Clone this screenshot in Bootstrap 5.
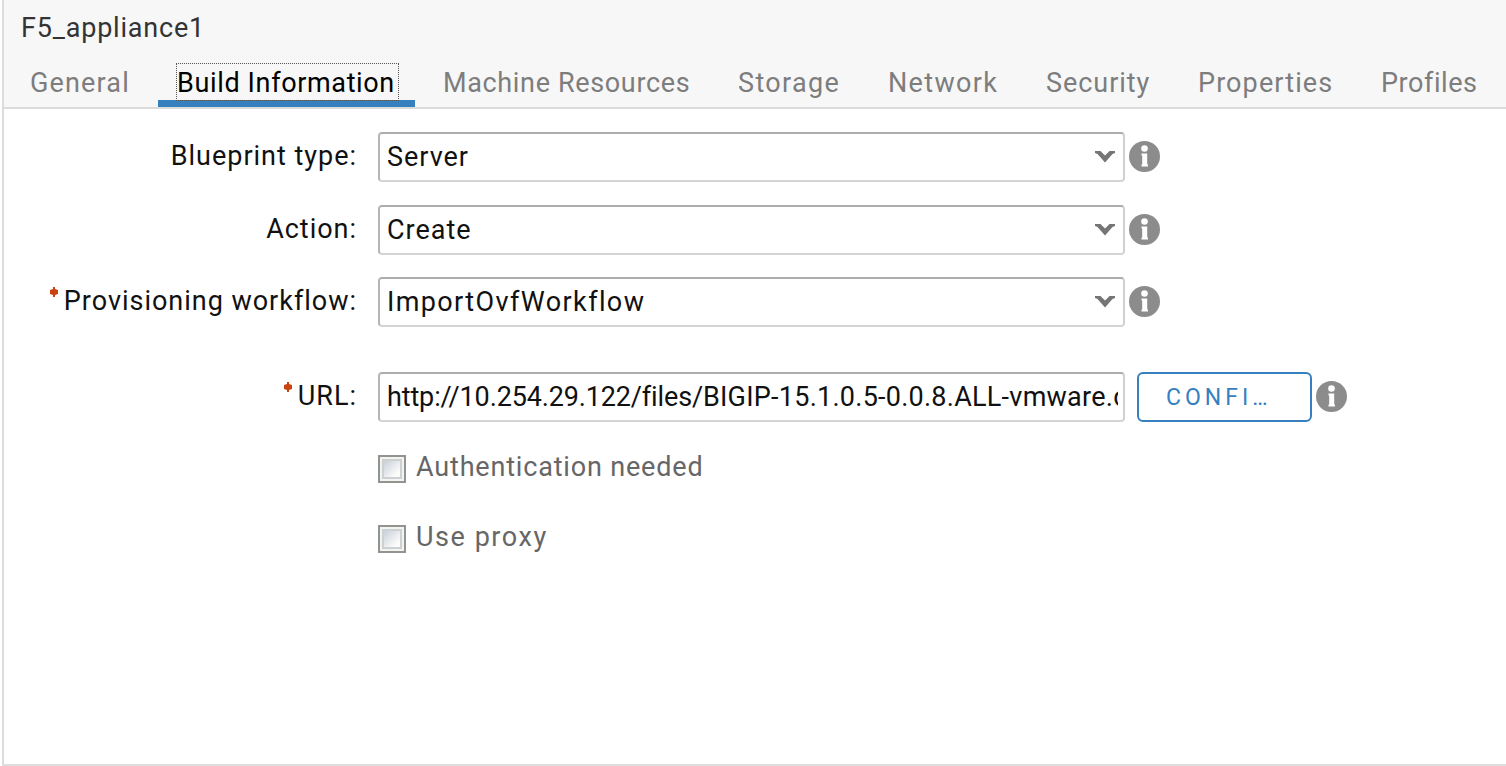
<!DOCTYPE html>
<html lang="en">
<head>
<meta charset="utf-8">
<title>F5_appliance1</title>
<link href="https://cdn.jsdelivr.net/npm/bootstrap@5.3.0/dist/css/bootstrap.min.css" rel="stylesheet">
<style>
body{font:27px/32px Roboto,sans-serif;letter-spacing:.98px;color:#111;background:#fff;overflow:hidden;white-space:nowrap}
.panel{height:766px;margin-left:2px;border-left:2px solid #dcdcdc;border-bottom:2px solid #dedede}
.panel-head{height:109px;background:#f7f7f7;border-bottom:2px solid #dcdcdc}
.panel-title{padding:12px 0 0 17px;height:58px;color:#333;letter-spacing:.8px}
.tabs{display:grid;grid-template-columns:138px 257px 286px 141px 149px 143px 174px 136px;column-gap:9px;margin-left:7px}
.tabs .nav-link{height:49px;padding:9px 0 0 19px;color:#7d7d7d}
.tabs .nav-link.active{color:#000;border-bottom:7px solid #3680bf;padding:5px 0 0 17px}
.tabs .nav-link.active span{display:block;width:223px;height:38px;padding-top:3px;border:1px dotted #555;margin-left:1px}
.form-line{height:49px;margin-bottom:24px}
.form-line:nth-child(2){margin-bottom:23px}
.caption{width:353px;margin-right:21px;padding-bottom:2px;text-align:right}
.req{display:inline-block;vertical-align:top;margin:2px 6px 0 0}
.field{width:747px;height:50px;padding:0 8px 0 7px;border:2px solid #c2c2c2;border-color:#adadad #d0d0d0 #d4d4d4 #b5b5b5;border-radius:4px;overflow:hidden;margin-right:4px;flex-shrink:0}
.url{padding-right:5px;margin-right:12px}
.clip{overflow:hidden;width:731px}
.config{width:175px;height:50px;margin-right:4px;padding:2px 0 0 27px;text-align:left;border:2px solid #3680bf;border-radius:6px;color:#3680bf;background:#fff;font-size:23px;line-height:44px;letter-spacing:4px}
.option{margin-left:374px;height:32px;color:#666}
.box{width:28px;height:28px;margin-right:10px;border:2px solid #92958f;background:#f3f4ef;padding:2px}
.box i{display:block;width:20px;height:20px;border:2px solid #ccd1d4;background:linear-gradient(135deg,#c9d0da,#fbfbf9 80%)}
svg{flex-shrink:0}
</style>
</head>
<body>
<svg class="d-none">
<symbol id="info" viewBox="0 0 32 32"><circle cx="15.500" cy="15.500" r="15.5" fill="#8c8c8c"/><circle cx="15.500" cy="7.500" r="3.300" fill="#fff"/><path d="M12.500 12.500h5.700v11h.8v2h-6.500v-2h.7v-9h-.7z" fill="#fff"/></symbol>
<symbol id="down" viewBox="0 0 20 12"><path d="M0 0h5.500L10 4.500 14.500 0H20v2l-2.500 1L10 11.500 2.500 3 0 2z" fill="#737672"/></symbol>
<symbol id="star" viewBox="0 0 8 10"><path d="M3 0h2v2l3 1v4L5 8v2H3V8L0 7V3l3-1z" fill="#c84310"/></symbol>
</svg>
<main class="panel">
<header class="panel-head">
<div class="panel-title">F5_appliance1</div>
<nav class="tabs">
<a class="nav-link" style="letter-spacing:1.15px">General</a>
<a class="nav-link active" style="letter-spacing:.64px"><span>Build Information</span></a>
<a class="nav-link" style="letter-spacing:.65px">Machine Resources</a>
<a class="nav-link" style="letter-spacing:1.35px">Storage</a>
<a class="nav-link" style="letter-spacing:1.35px">Network</a>
<a class="nav-link" style="letter-spacing:.95px">Security</a>
<a class="nav-link" style="letter-spacing:1.1px">Properties</a>
<a class="nav-link" style="letter-spacing:.55px">Profiles</a>
</nav>
</header>
<form style="padding-top:23px">
<div class="form-line d-flex align-items-center"><label class="caption">Blueprint type:</label><div class="field d-flex align-items-center justify-content-between"><span>Server</span><svg width="20" height="12"><use href="#down"/></svg></div><svg width="32" height="32"><use href="#info"/></svg></div>
<div class="form-line d-flex align-items-center"><label class="caption">Action:</label><div class="field d-flex align-items-center justify-content-between"><span>Create</span><svg width="20" height="12"><use href="#down"/></svg></div><svg width="32" height="32"><use href="#info"/></svg></div>
<div class="form-line d-flex align-items-center" style="margin-bottom:46px"><label class="caption"><svg class="req" width="8" height="10"><use href="#star"/></svg>Provisioning workflow:</label><div class="field d-flex align-items-center justify-content-between"><span style="letter-spacing:1.38px">ImportOvfWorkflow</span><svg width="20" height="12"><use href="#down"/></svg></div><svg width="32" height="32"><use href="#info"/></svg></div>
<div class="form-line d-flex align-items-center" style="margin-bottom:32px"><label class="caption"><svg class="req" width="8" height="10"><use href="#star"/></svg>URL:</label><div class="field url d-flex align-items-center"><div class="clip"><span style="letter-spacing:-.14px">http://10.254.29.122/files/</span><span style="letter-spacing:.25px">BIGIP-15.1.0.5-0.0.8.ALL-vmware.o</span></div></div><button type="button" class="config">CONFI…</button><svg width="32" height="32"><use href="#info"/></svg></div>
<div class="option d-flex align-items-center" style="margin-bottom:38px"><span class="box"><i></i></span><label class="pb-1" style="letter-spacing:.82px">Authentication needed</label></div>
<div class="option d-flex align-items-center"><span class="box"><i></i></span><label class="pb-1" style="letter-spacing:1.55px">Use proxy</label></div>
</form>
</main>
<script src="https://cdn.jsdelivr.net/npm/bootstrap@5.3.0/dist/js/bootstrap.bundle.min.js"></script>
</body>
</html>
